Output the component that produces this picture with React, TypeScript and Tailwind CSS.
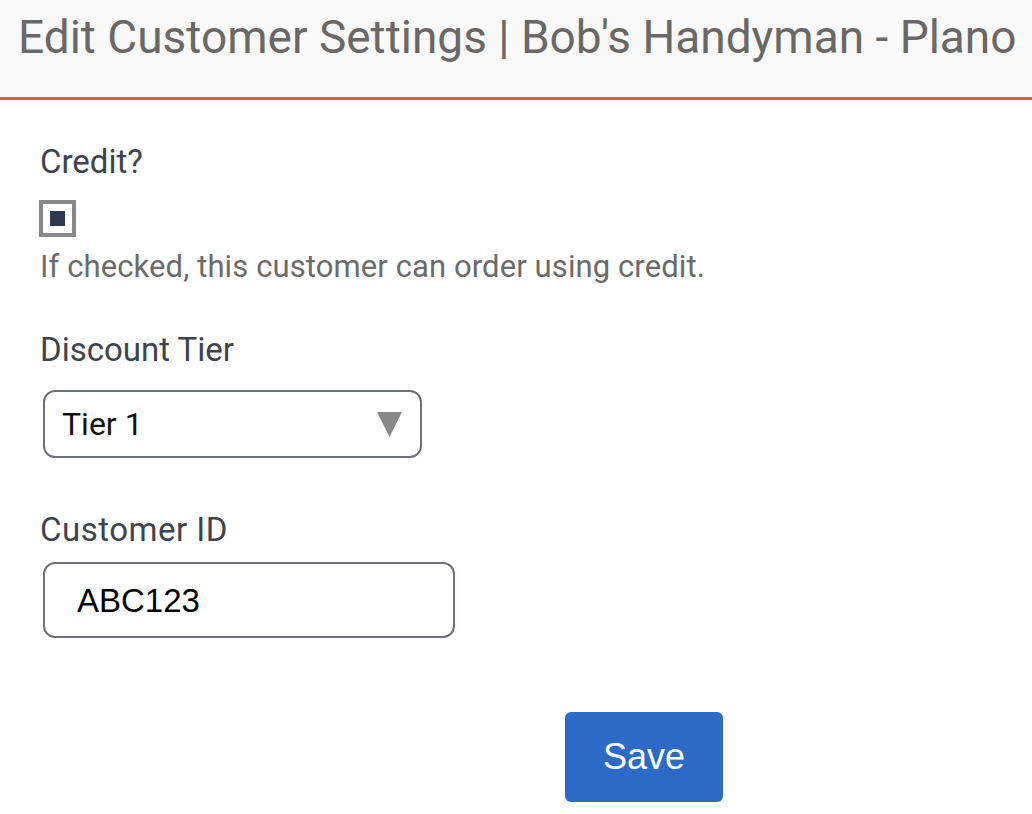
import React from "react";

export default function App() {
  return (
    <div className="w-[1032px] h-[814px] bg-white overflow-hidden" style={{ fontFamily: "Roboto, 'Liberation Sans', sans-serif" }}>
      <header className="h-[100px] bg-[#f9f9f9] border-b-[3px] border-[#ee5a35] pl-[18px] pt-[14px]">
        <h1 className="text-[46px] leading-[46px] text-[#6a6767] whitespace-nowrap font-normal">
          Edit Customer Settings | Bob's Handyman - Plano
        </h1>
      </header>
      <main className="pl-[40px] flex flex-col items-start">
        <label className="mt-[45px] text-[33px] leading-[33px] text-[#3d4450]">Credit?</label>
        <div className="mt-[22px] w-[37px] h-[37px] border-[4px] border-[#888888] bg-white flex items-center justify-center -ml-[1px]">
          <div className="w-[15px] h-[15px] bg-[#2c3a4d]" />
        </div>
        <p className="mt-[14px] text-[31px] leading-[31px] text-[#6b6b6b] tracking-[0.1px]">
          If checked, this customer can order using credit.
        </p>
        <label className="mt-[51px] text-[33px] leading-[33px] text-[#3d4450]">Discount Tier</label>
        <div className="mt-[24px] ml-[3px] w-[379px] h-[68px] border-2 border-[#6e717b] rounded-[12px] flex items-center justify-between pl-[17px] pr-[18px]">
          <span className="text-[32px] leading-[32px] text-[#111111]">Tier 1</span>
          <svg width="25" height="25" viewBox="0 0 25 25">
            <polygon points="0,0 25,0 12.5,25" fill="#888888" />
          </svg>
        </div>
        <label className="mt-[55px] text-[33px] leading-[33px] text-[#3d4450] tracking-[0.5px]">Customer ID</label>
        <div className="mt-[16px] ml-[3px] w-[412px] h-[76px] border-2 border-[#6e717b] rounded-[12px] flex items-center pl-[32px]">
          <span className="text-[33px] leading-[33px] text-black" style={{ fontFamily: "'Liberation Sans', Arial, sans-serif" }}>ABC123</span>
        </div>
        <button className="mt-[74px] ml-[525px] w-[158px] h-[90px] bg-[#2b6bc7] rounded-[6px] text-white text-[36px] leading-[36px] flex items-center justify-center" style={{ fontFamily: "'Liberation Sans', Arial, sans-serif" }}>
          Save
        </button>
      </main>
    </div>
  );
}
